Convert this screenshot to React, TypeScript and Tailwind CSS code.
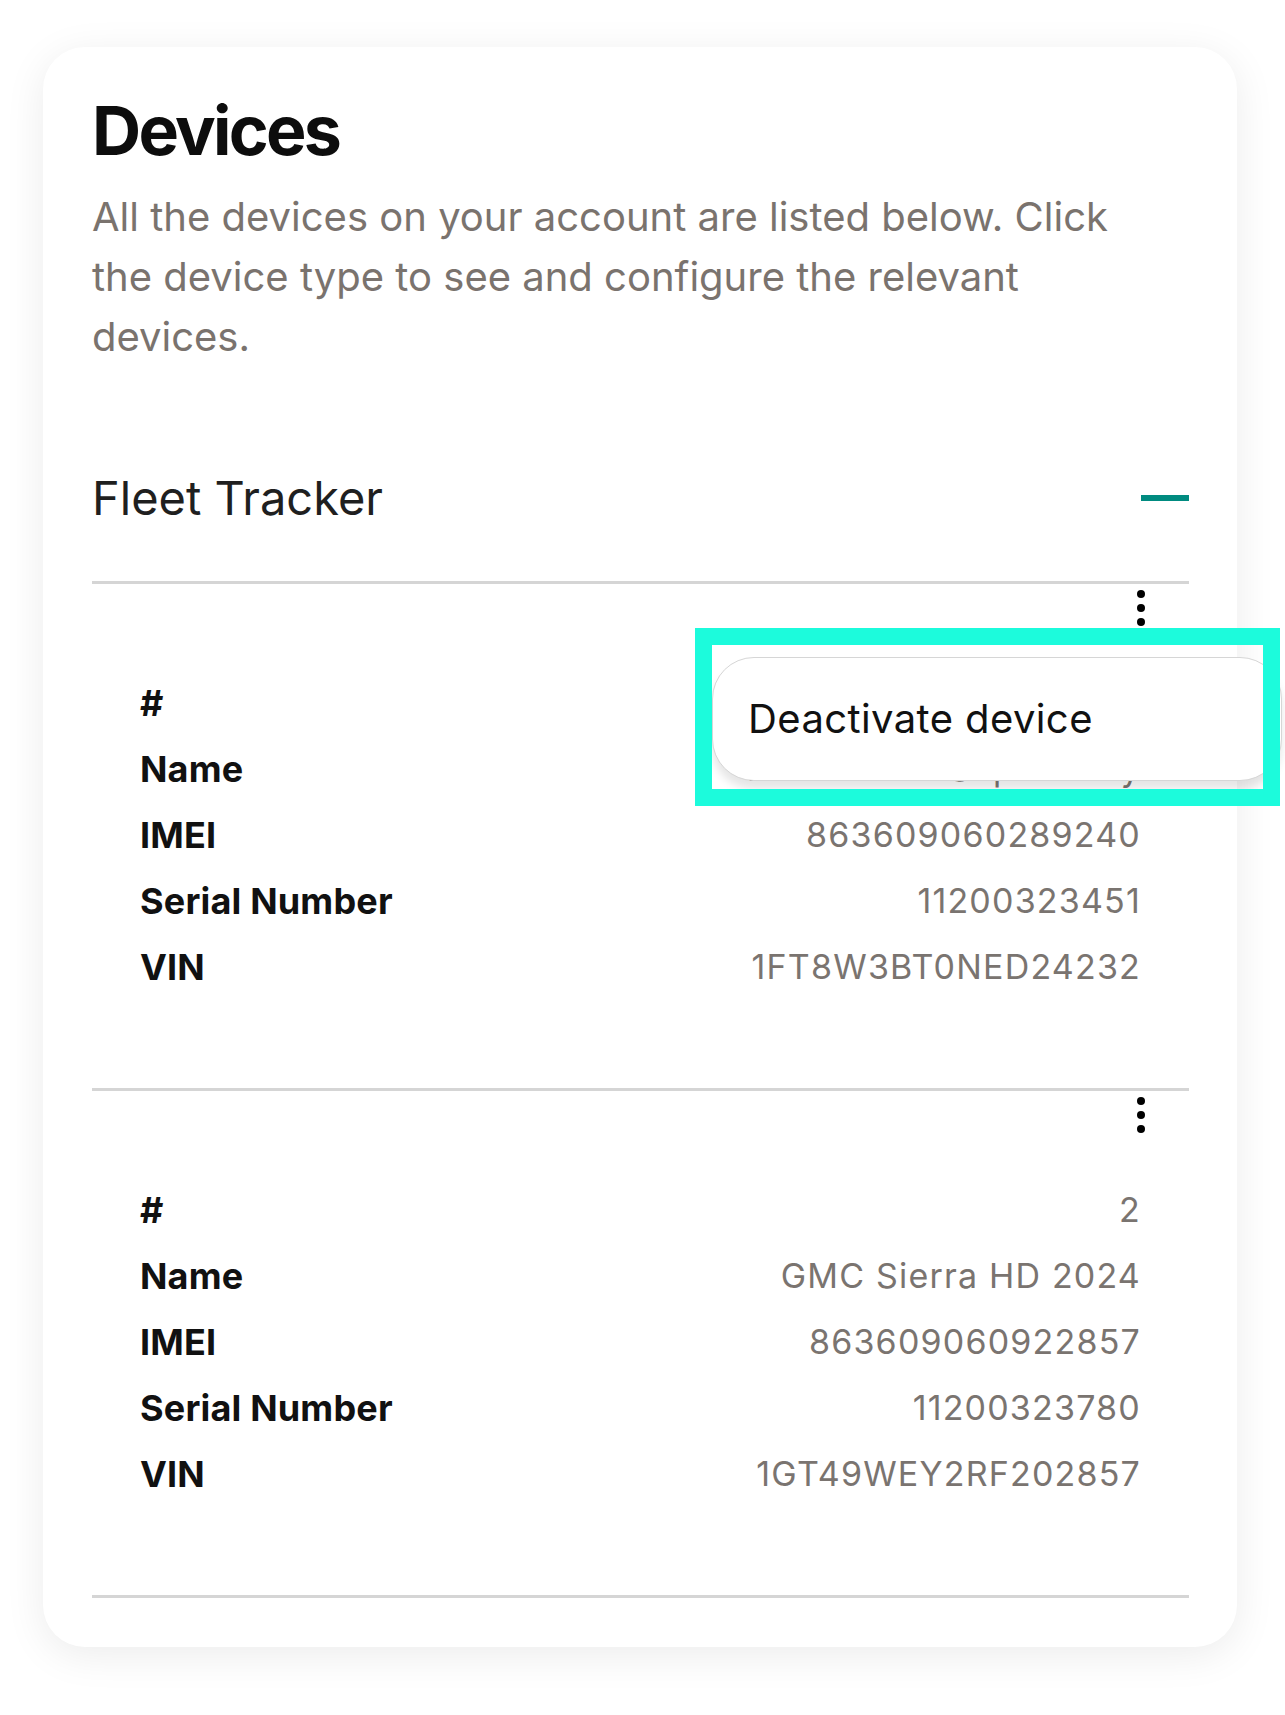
import React from "react";

interface Device {
  index: number;
  name: string;
  imei: string;
  serial: string;
  vin: string;
}

const devices: Device[] = [
  {
    index: 1,
    name: "Ford F-250 Super Duty",
    imei: "863609060289240",
    serial: "11200323451",
    vin: "1FT8W3BT0NED24232",
  },
  {
    index: 2,
    name: "GMC Sierra HD 2024",
    imei: "863609060922857",
    serial: "11200323780",
    vin: "1GT49WEY2RF202857",
  },
];

const font = { fontFamily: "Inter, 'Noto Sans', sans-serif" };

const MoreDots = () => (
  <button className="flex flex-col gap-[6px] p-0" aria-label="More">
    <span className="block h-[8px] w-[8px] rounded-full bg-black" />
    <span className="block h-[8px] w-[8px] rounded-full bg-black" />
    <span className="block h-[8px] w-[8px] rounded-full bg-black" />
  </button>
);

const DeviceBlock = ({ device }: { device: Device }) => {
  const rows: [string, string][] = [
    ["#", String(device.index)],
    ["Name", device.name],
    ["IMEI", device.imei],
    ["Serial Number", device.serial],
    ["VIN", device.vin],
  ];

  return (
    <div className="border-t-[3px] border-[#d5d5d5]">
      <div className="flex justify-end pt-[6px] pr-[44px]">
        <MoreDots />
      </div>
      <div className="mt-[44px] mb-[88px] pl-[48px] pr-[48px]">
        {rows.map(([label, value]) => (
          <div key={label} className="flex items-center justify-between leading-[66px] h-[66px]">
            <span className="text-[36px] font-bold text-[#111111] tracking-[0.005em]">{label}</span>
            <span className="text-[34px] text-[#7a7470] tracking-[0.035em]">{value}</span>
          </div>
        ))}
      </div>
    </div>
  );
};

export default function App() {
  return (
    <div className="relative min-h-[1715px] w-full bg-white overflow-hidden" style={font}>
      <div className="ml-[43px] mt-[47px] w-[1194px] rounded-[42px] bg-white pl-[49px] pr-[48px] pt-[48px] pb-[49px] shadow-[0_8px_40px_rgba(0,0,0,0.08)]">
        <h1 className="text-[68px] leading-[70px] font-bold tracking-[-0.04em] text-[#0d0d0d]">Devices</h1>
        <p className="mt-[22px] max-w-[1060px] text-[40px] leading-[60px] text-[#7a736e]">
          All the devices on your account are listed below. Click the device type to see and configure the relevant devices.
        </p>

        <div className="mt-[103px] mb-[56px] flex items-center justify-between">
          <h2 className="text-[47px] leading-[55px] text-[#1f1f1f]">Fleet Tracker</h2>
          <span className="block h-[6px] w-[48px] bg-[#008b80]" />
        </div>

        {devices.map((d) => (
          <DeviceBlock key={d.index} device={d} />
        ))}
        <div className="border-t-[3px] border-[#d5d5d5]" />
      </div>

      {/* open menu for device 1 */}
      <div className="absolute left-[712px] top-[657px] flex h-[124px] w-[570px] items-center rounded-[42px] border border-[#d6d6d6] bg-white pl-[35px] shadow-[0_8px_8px_rgba(0,0,0,0.10)]">
        <span className="text-[40px] tracking-[0.01em] text-[#111111]">Deactivate device</span>
      </div>

      {/* highlight frame */}
      <div className="pointer-events-none absolute left-[695px] top-[628px] h-[178px] w-[585px] border-[17px] border-[#1cfbdc]" />
    </div>
  );
}
